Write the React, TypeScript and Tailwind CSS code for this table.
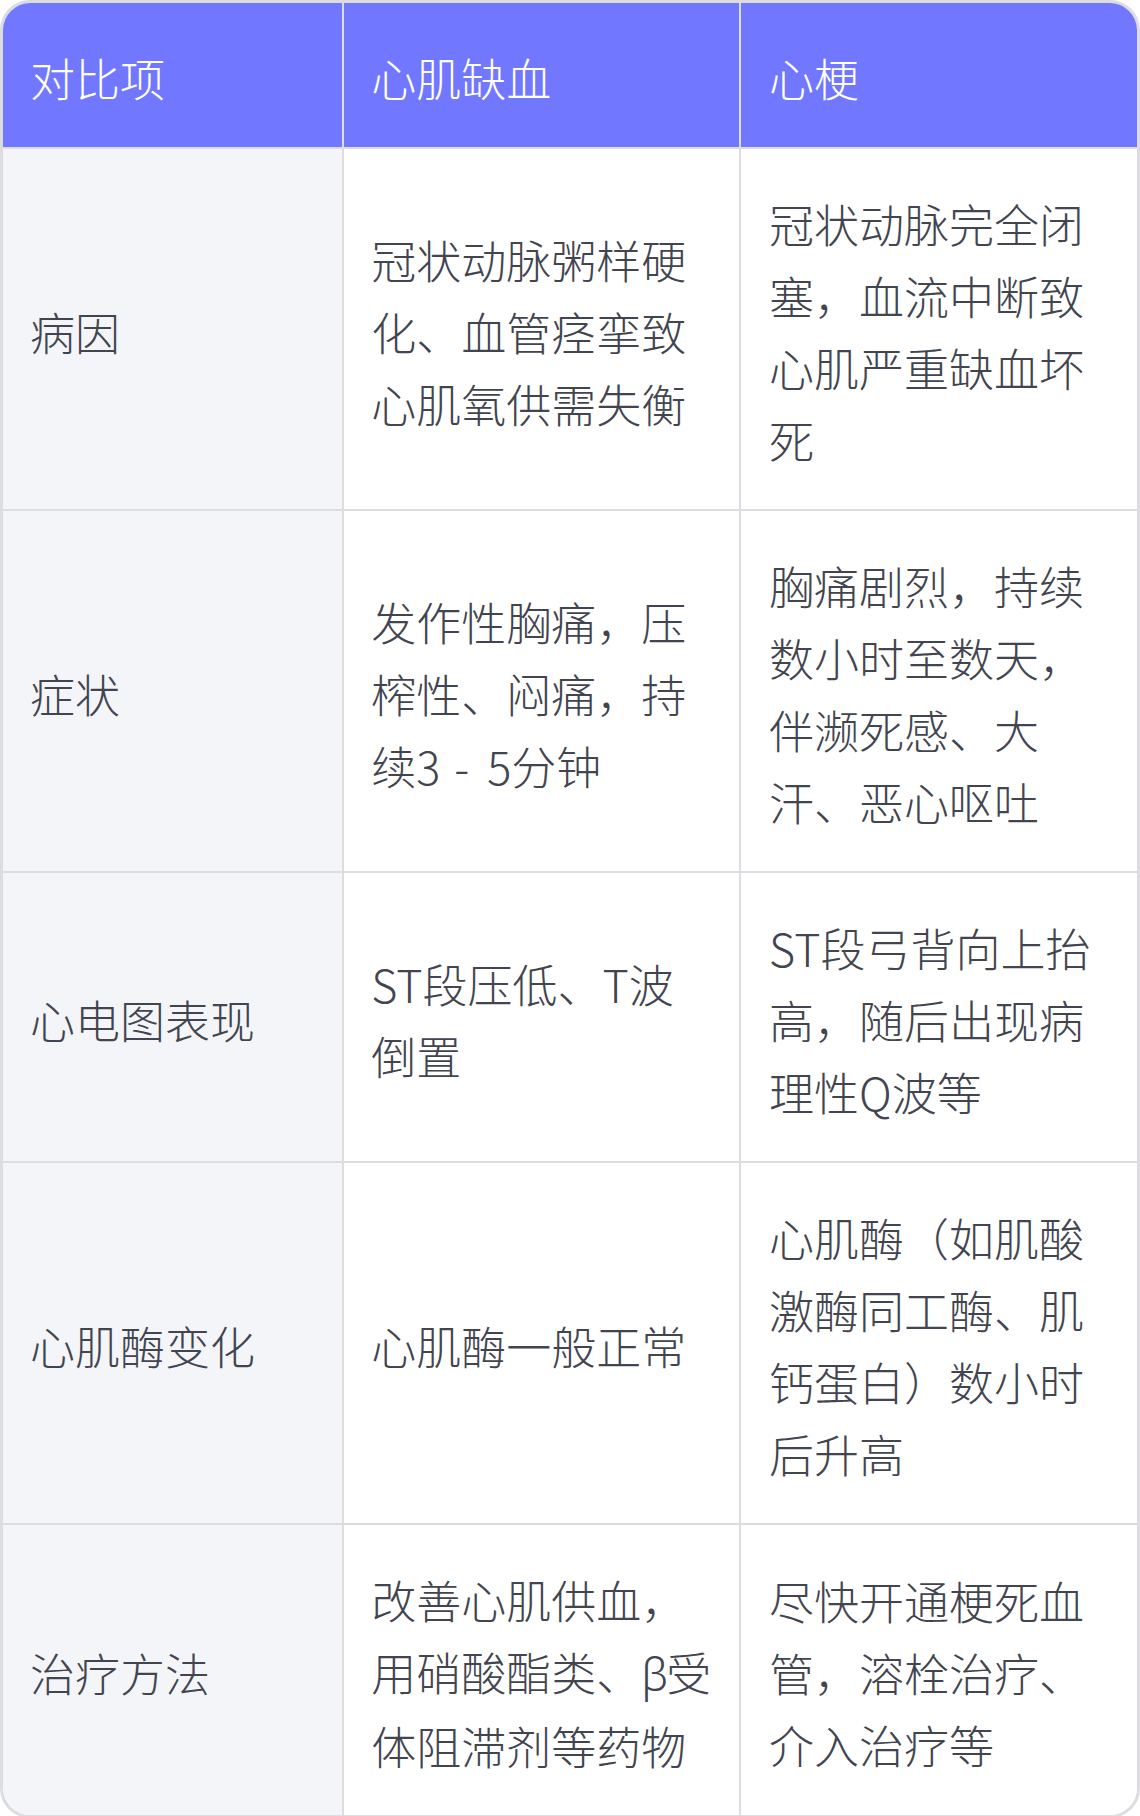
import React from "react";

const rows: [string, React.ReactNode, string][] = [
  ["病因", "冠状动脉粥样硬化、血管痉挛致心肌氧供需失衡", "冠状动脉完全闭塞，血流中断致心肌严重缺血坏死"],
  [
    "症状",
    <>
      发作性胸痛，压榨性、闷痛，持续3<span className="tracking-[4px]"> - </span>5分钟
    </>,
    "胸痛剧烈，持续数小时至数天，伴濒死感、大汗、恶心呕吐",
  ],
  ["心电图表现", "ST段压低、T波倒置", "ST段弓背向上抬高，随后出现病理性Q波等"],
  ["心肌酶变化", "心肌酶一般正常", "心肌酶（如肌酸激酶同工酶、肌钙蛋白）数小时后升高"],
  [
    "治疗方法",
    <>
      改善心肌供血，用硝酸酯类、
      <span className="tracking-[-2px]" style={{ fontFamily: '"Noto Sans", sans-serif' }}>β</span>
      受体阻滞剂等药物
    </>,
    "尽快开通梗死血管，溶栓治疗、介入治疗等",
  ],
];

export default function App() {
  return (
    <div
      className="w-[1140px] h-[1816px] bg-white"
      style={{ fontFamily: '"Noto Sans CJK SC", "Noto Sans", sans-serif' }}
    >
      <div className="rounded-[30px] border-[3px] border-[#dcdce1] overflow-hidden">
        <table className="w-full table-fixed border-collapse text-[45px] leading-[72px] font-light">
          <colgroup>
            <col className="w-[30%]" />
            <col className="w-[35%]" />
            <col className="w-[35%]" />
          </colgroup>
          <thead>
            <tr className="bg-[#7277ff] text-white">
              <th className="h-[144px] pl-[27px] pr-[26px] pt-[39px] pb-[33px] text-left font-light border-r-2 border-b-2 border-[#dcdce1]">对比项</th>
              <th className="h-[144px] pl-[27px] pr-[26px] pt-[39px] pb-[33px] text-left font-light border-r-2 border-b-2 border-[#dcdce1]">心肌缺血</th>
              <th className="h-[144px] pl-[28px] pr-[26px] pt-[39px] pb-[33px] text-left font-light border-b-2 border-[#dcdce1]">心梗</th>
            </tr>
          </thead>
          <tbody className="text-[#42454f]">
            {rows.map((r, i) => {
              const last = i === rows.length - 1;
              return (
                <tr key={i}>
                  <td className={`pl-[27px] pr-[26px] pt-[39px] pb-[33px] align-middle bg-[#f4f5f9] border-r-2 border-[#dcdce1] ${last ? "" : "border-b-2"}`}>{r[0]}</td>
                  <td className={`pl-[27px] pr-[26px] pt-[39px] pb-[33px] align-middle bg-white border-r-2 border-[#dcdce1] ${last ? "" : "border-b-2"}`}>{r[1]}</td>
                  <td className={`pl-[28px] pr-[26px] pt-[39px] pb-[33px] align-middle bg-white border-[#dcdce1] ${last ? "" : "border-b-2"}`}>{r[2]}</td>
                </tr>
              );
            })}
          </tbody>
        </table>
      </div>
    </div>
  );
}
